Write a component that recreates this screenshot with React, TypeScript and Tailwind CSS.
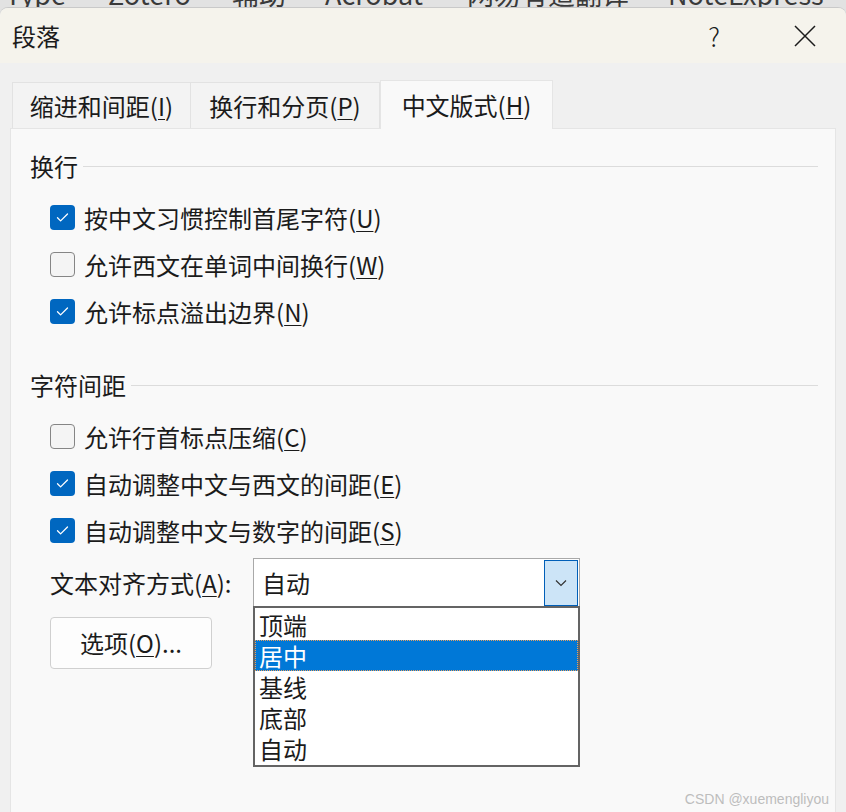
import type { ReactNode } from 'react';

const FONT = "font-['Noto_Sans_CJK_SC','Noto_Sans',sans-serif]";

function Mn({ pre, k, post = ')' }: { pre: string; k: string; post?: string }) {
  return (
    <>
      {pre}
      <span className="underline decoration-1 underline-offset-[3px]">{k}</span>
      {post}
    </>
  );
}

function Box({ checked }: { checked: boolean }) {
  if (checked) {
    return (
      <div className="w-[25px] h-[25px] rounded-[4px] bg-[#0067c0] flex items-center justify-center shrink-0">
        <svg width="25" height="25" viewBox="0 0 25 25">
          <path d="M7.5 12.8 L10.6 15.9 L17.5 9" fill="none" stroke="#fff" strokeWidth="1.3" strokeLinecap="round" strokeLinejoin="round" />
        </svg>
      </div>
    );
  }
  return <div className="w-[25px] h-[25px] rounded-[4px] bg-[#f4f4f4] border border-[#858585] shrink-0" />;
}

function Row({ checked, children }: { checked: boolean; children: ReactNode }) {
  return (
    <div className="flex h-[47px] items-center pl-5">
      <Box checked={checked} />
      <span className="ml-[9px] text-[24px] leading-none text-[#1b1b1b]">{children}</span>
    </div>
  );
}

function Heading({ title }: { title: string }) {
  return (
    <div className="flex h-8 items-center">
      <span className="text-[24px] leading-none text-[#1b1b1b]">{title}</span>
      <div className="ml-[5px] flex-1 h-px bg-[#dcdcdc]" />
    </div>
  );
}

const OPTIONS = ['顶端', '居中', '基线', '底部', '自动'];

export default function App() {
  return (
    <div className={`relative w-[846px] h-[812px] overflow-hidden bg-[#e2e2e2] ${FONT}`}>
      {/* window behind, cut off */}
      <div className="h-[7px] overflow-hidden">
        <div className="-mt-[20px] flex items-end pl-[5px] text-[27px] leading-none text-[#3a3a3a] whitespace-nowrap">
          <span className="w-[103px] shrink-0">Type</span>
          <span className="w-[124px] shrink-0">Zotero</span>
          <span className="w-[93px] shrink-0">辅助</span>
          <span className="w-[142px] shrink-0">Acrobat</span>
          <span className="w-[201px] shrink-0">网易有道翻译</span>
          <span className="shrink-0">NoteExpress</span>
        </div>
      </div>

      <div className="rounded-t-[8px] border-t border-[#c9c9c9] bg-[#f0f0f0] h-full">
        {/* title bar */}
        <div className="h-[55px] rounded-t-[8px] bg-[#f5f3ec] flex items-center pl-[12px]">
          <span className="text-[24px] leading-none text-[#1b1b1b]">段落</span>
          <div className="ml-auto flex items-center">
            <span className="text-[26px] leading-none text-[#1b1b1b] font-light">?</span>
            <svg className="ml-[74px] mr-[30px]" width="22" height="22" viewBox="0 0 22 22">
              <path d="M1 1 L21 21 M21 1 L1 21" stroke="#1b1b1b" strokeWidth="1.5" />
            </svg>
          </div>
        </div>

        <div className="pt-[17px] px-[10px]">
          {/* tabs */}
          <div className="flex items-end h-[48px] pl-[2px]">
            <div className="h-[46px] w-[179px] border border-b-0 border-[#e2e2e2] bg-[#f3f3f3] flex items-center justify-center text-[24px] leading-none text-[#1b1b1b]">
              <Mn pre="缩进和间距(" k="I" />
            </div>
            <div className="h-[46px] w-[189px] border-t border-r border-[#e2e2e2] bg-[#f3f3f3] flex items-center justify-center text-[24px] leading-none text-[#1b1b1b]">
              <Mn pre="换行和分页(" k="P" />
            </div>
            <div className="relative z-10 -mb-px h-[49px] w-[173px] border border-b-0 border-[#e5e5e5] bg-[#f9f9f9] flex items-center justify-center text-[24px] leading-none text-[#1b1b1b]">
              <Mn pre="中文版式(" k="H" />
            </div>
          </div>

          {/* panel */}
          <div className="h-[700px] border border-[#e5e5e5] bg-[#f9f9f9] pt-[21px] pl-[19px] pr-[17px]">
            <Heading title="换行" />
            <div className="mt-3">
              <Row checked><Mn pre="按中文习惯控制首尾字符(" k="U" /></Row>
              <Row checked={false}><Mn pre="允许西文在单词中间换行(" k="W" /></Row>
              <Row checked><Mn pre="允许标点溢出边界(" k="N" /></Row>
            </div>

            <div className="mt-[34px]">
              <Heading title="字符间距" />
            </div>
            <div className="mt-3">
              <Row checked={false}><Mn pre="允许行首标点压缩(" k="C" /></Row>
              <Row checked><Mn pre="自动调整中文与西文的间距(" k="E" /></Row>
              <Row checked><Mn pre="自动调整中文与数字的间距(" k="S" /></Row>
            </div>

            {/* alignment select */}
            <div className="mt-[4px] pl-5 flex items-center">
              <span className="w-[203px] text-[24px] leading-none text-[#1b1b1b]">
                <Mn pre="文本对齐方式(" k="A" post="):" />
              </span>
              <div className="relative w-[327px] h-[50px] border border-[#a9a9a9] bg-white flex items-center">
                <span className="pl-[8px] text-[24px] leading-none text-[#1b1b1b]">自动</span>
                <div className="ml-auto mr-px h-[46px] w-[34px] border border-[#005fb8] bg-[#cce4f7] flex items-center justify-center">
                  <svg width="12" height="8" viewBox="0 0 12 8">
                    <path d="M1 1.5 L6 6.5 L11 1.5" fill="none" stroke="#333" strokeWidth="1.2" />
                  </svg>
                </div>

                <div className="absolute left-[-1px] top-[47px] z-20 w-[327px] border-2 border-[#646464] bg-white pt-px pb-px">
                  {OPTIONS.map((o, i) => (
                    <div
                      key={o}
                      className={
                        i === 1
                          ? 'h-[31px] flex items-center pl-[4px] bg-[#0078d7] text-white outline-1 outline-dotted outline-[#e8a060] -outline-offset-1 text-[24px] leading-none'
                          : 'h-[31px] flex items-center pl-[4px] text-[#1b1b1b] text-[24px] leading-none'
                      }
                    >
                      {o}
                    </div>
                  ))}
                </div>
              </div>
            </div>

            <div className="mt-[9px] pl-5">
              <div className="w-[162px] h-[52px] rounded-[4px] border border-[#d0d0d0] bg-[#fdfdfd] flex items-center justify-center text-[24px] leading-none text-[#1b1b1b]">
                <Mn pre="选项(" k="O" post=")..." />
              </div>
            </div>
          </div>
        </div>
      </div>

      <div className="absolute right-[17px] bottom-[6px] text-[14px] leading-none text-[#bdbdbd] font-['Liberation_Sans',sans-serif]">
        CSDN @xuemengliyou
      </div>
    </div>
  );
}
